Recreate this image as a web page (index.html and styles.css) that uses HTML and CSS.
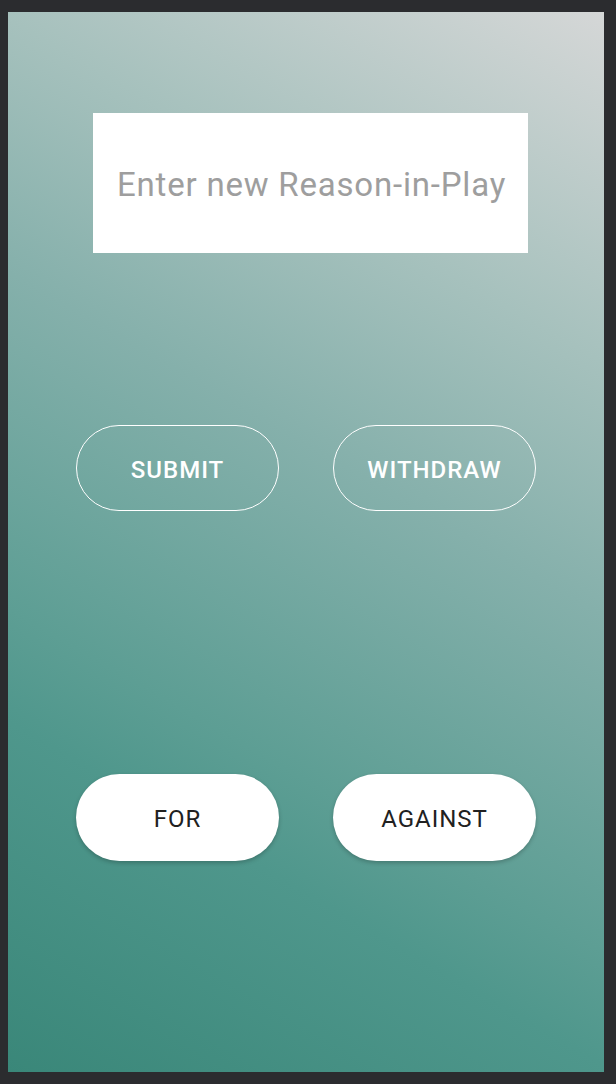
FILE: index.html
```html
<!DOCTYPE html>
<html>
<head>
<meta charset="utf-8">
<link rel="stylesheet" href="styles.css">
</head>
<body>
<div class="screen">
  <div class="field"><input class="reason" type="text" placeholder="Enter new Reason-in-Play"></div>
  <div class="row row-top">
    <button class="btn outline">SUBMIT</button>
    <button class="btn outline">WITHDRAW</button>
  </div>
  <div class="row row-bottom">
    <button class="btn solid">FOR</button>
    <button class="btn solid">AGAINST</button>
  </div>
</div>
</body>
</html>
```
FILE: styles.css
```css
html, body {
  margin: 0;
  padding: 0;
  background: #2b2c2f;
}
body {
  padding: 12px 12px 12px 8px;
  width: 596px;
  height: 1060px;
  font-family: Roboto, "Liberation Sans", sans-serif;
}
.screen {
  width: 596px;
  height: 1060px;
  box-sizing: border-box;
  padding-top: 101px;
  display: flex;
  flex-direction: column;
  background: linear-gradient(30deg, #3a8779 0%, #4f978c 25%, #5d9e94 33%, #85b0ab 57%, #a6c1bd 75%, #d5d7d7 100%);
}
.field {
  margin-left: 85px;
  width: 435px;
  height: 140px;
  background: #ffffff;
  display: flex;
  align-items: center;
}
.reason {
  border: none;
  outline: none;
  background: transparent;
  width: 100%;
  padding: 2px 0 0 24px;
  font-family: Roboto, "Liberation Sans", sans-serif;
  font-size: 33px;
  letter-spacing: 0.8px;
  color: #212121;
}
.reason::placeholder {
  color: #9e9e9e;
}
.row {
  display: flex;
  justify-content: center;
  gap: 54px;
}
.row-top {
  margin-top: 172px;
}
.row-bottom {
  margin-top: 263px;
}
.btn {
  width: 203px;
  height: 86px;
  border-radius: 44px;
  font-family: Roboto, "Liberation Sans", sans-serif;
  font-size: 24px;
  letter-spacing: 1px;
  padding: 3px 0 0 0;
  cursor: pointer;
}
.outline {
  background: transparent;
  border: 1.5px solid #ffffff;
  color: #ffffff;
  font-weight: 500;
}
.solid {
  height: 87px;
  background: #ffffff;
  border: none;
  color: #212121;
  font-weight: 400;
  box-shadow: 0 2px 4px rgba(0, 0, 0, 0.22);
}
```
